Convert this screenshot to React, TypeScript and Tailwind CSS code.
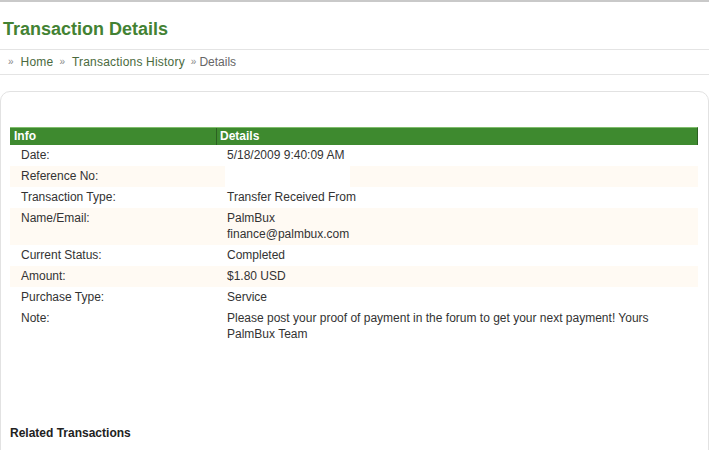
const rows: { label: string; value: React.ReactNode; alt?: boolean; gap?: boolean }[] = [
  { label: "Date:", value: "5/18/2009 9:40:09 AM" },
  { label: "Reference No:", value: "", alt: true, gap: true },
  { label: "Transaction Type:", value: "Transfer Received From" },
  {
    label: "Name/Email:",
    value: (
      <>
        PalmBux
        <br />
        finance@palmbux.com
      </>
    ),
    alt: true,
  },
  { label: "Current Status:", value: "Completed" },
  { label: "Amount:", value: "$1.80 USD", alt: true },
  { label: "Purchase Type:", value: "Service" },
  {
    label: "Note:",
    value: (
      <>
        Please post your proof of payment in the forum to get your next payment! Yours
        <br />
        PalmBux Team
      </>
    ),
  },
];

function Crumb({ children, link }: { children: React.ReactNode; link?: boolean }) {
  return (
    <span className="inline-flex items-center">
      <span className={`text-[10px] text-[#888] ${link ? "mr-[7px]" : "mr-[3px]"}`}>»</span>
      <span className={link ? "text-[#4a6a3d] mr-[6px] tracking-[0.2px]" : "text-[#666]"}>{children}</span>
    </span>
  );
}

export default function App() {
  return (
    <div className="w-[709px] h-[450px] overflow-hidden bg-white text-[12px] text-[#333] font-['Liberation_Sans',Arial,sans-serif]">
      <div className="border-t-2 border-[#c9c9c9]" />
      <h1 className="mt-[16px] mb-[9px] pl-[3px] text-[18px] leading-[22px] font-bold text-[#438233]">
        Transaction Details
      </h1>

      <div className="border-t border-b border-[#e4e4e4] h-[26px] pl-[8px] flex items-center leading-[24px]">
        <Crumb link>Home</Crumb>
        <Crumb link>Transactions History</Crumb>
        <Crumb>Details</Crumb>
      </div>

      <div className="mt-[16px] h-[400px] border border-[#e2e2e2] rounded-[10px] pt-[35px] pl-[9px] pr-[10px]">
        <div className="flex h-[18px] border-t border-[#80bd6c] bg-[#3e8a2f] border-r border-r-[#2c6122] text-white font-bold leading-[17px]">
          <div className="w-[207px] pl-[4px] border-r border-[#2c6122]">Info</div>
          <div className="flex-1 pl-[3px]">Details</div>
        </div>

        {rows.map((r) => (
          <div
            key={r.label}
            className={`flex leading-[16px] ${r.alt ? "bg-[#fffaf3]" : ""}`}
          >
            <div className="w-[207px] pl-[11px] pt-[2px] pb-[3px]">{r.label}</div>
            {r.gap ? (
              <div className="flex-1 pl-[8px]">
                <div className="w-[125px] h-[21px] bg-white" />
              </div>
            ) : (
              <div className="flex-1 pl-[10px] pt-[2px] pb-[3px]">{r.value}</div>
            )}
          </div>
        ))}

        <div className="mt-[80px] font-bold text-[#222] leading-[16px]">Related Transactions</div>
      </div>
    </div>
  );
}
